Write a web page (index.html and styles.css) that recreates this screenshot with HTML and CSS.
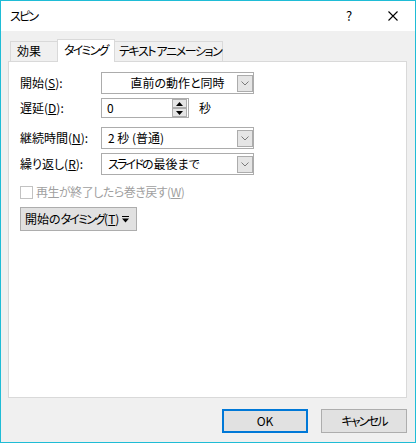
FILE: index.html
```html
<!DOCTYPE html>
<html lang="ja">
<head>
<meta charset="utf-8">
<title>スピン</title>
<link rel="stylesheet" href="styles.css">
</head>
<body>
<div class="window">
  <div class="titlebar">
    <span class="title kana">スピン</span>
    <span class="help">?</span>
    <span class="close"><svg width="10" height="10" viewBox="0 0 10 10"><path d="M0.5 0.5L9.5 9.5M9.5 0.5L0.5 9.5" stroke="#000" stroke-width="1.1" fill="none"/></svg></span>
  </div>
  <div class="tabs">
    <div class="tab tab-first">効果</div>
    <div class="tab tab-active kana">タイミング</div>
    <div class="tab tab-last kana">テキスト アニメーション</div>
  </div>
  <div class="panel">
    <div class="row row-1">
      <span class="label">開始(<u>S</u>):</span>
      <div class="combo">
        <span class="val val-center">直前の動作と同時</span>
        <span class="dd"><svg width="8" height="5" viewBox="0 0 8 5"><path d="M0.5 0.5L4 4L7.5 0.5" stroke="#7a7a7a" stroke-width="1" fill="none"/></svg></span>
      </div>
    </div>
    <div class="row row-2">
      <span class="label">遅延(<u>D</u>):</span>
      <div class="spin">
        <span class="val">0</span>
        <span class="spin-btns">
          <span class="sb"><svg width="7" height="4" viewBox="0 0 7 4"><path d="M0 4L3.5 0L7 4Z" fill="#000"/></svg></span>
          <span class="sb"><svg width="7" height="4" viewBox="0 0 7 4"><path d="M0 0L3.5 4L7 0Z" fill="#000"/></svg></span>
        </span>
      </div>
      <span class="unit">秒</span>
    </div>
    <div class="row row-3">
      <span class="label">継続時間(<u>N</u>):</span>
      <div class="combo">
        <span class="val">2 秒 (普通)</span>
        <span class="dd"><svg width="8" height="5" viewBox="0 0 8 5"><path d="M0.5 0.5L4 4L7.5 0.5" stroke="#7a7a7a" stroke-width="1" fill="none"/></svg></span>
      </div>
    </div>
    <div class="row row-4">
      <span class="label">繰り返し(<u>R</u>):</span>
      <div class="combo">
        <span class="val"><span class="kana">スライド</span>の最後まで</span>
        <span class="dd"><svg width="8" height="5" viewBox="0 0 8 5"><path d="M0.5 0.5L4 4L7.5 0.5" stroke="#7a7a7a" stroke-width="1" fill="none"/></svg></span>
      </div>
    </div>
    <div class="row row-check">
      <span class="cb"></span>
      <span class="disabled">再生が終了したら巻き戻す(<u>W</u>)</span>
    </div>
    <div class="row row-btn">
      <div class="tbtn">
        <span>開始の<span class="kana">タイミング</span>(<u>T</u>)</span>
        <svg class="tbtn-icon" width="7" height="7" viewBox="0 0 7 7"><path d="M0 0H7V1H0Z M0 2.5H7L3.5 6.5Z" fill="#000"/></svg>
      </div>
    </div>
  </div>
  <div class="buttons">
    <div class="btn btn-default">OK</div>
    <div class="btn kana">キャンセル</div>
  </div>
</div>
</body>
</html>
```
FILE: styles.css
```css
* { box-sizing: border-box; }
html, body { margin: 0; padding: 0; }
body {
  font-family: "Noto Sans CJK JP", "Noto Sans", sans-serif;
  font-size: 12px;
  line-height: 16px;
  color: #000;
  background: #fff;
  font-feature-settings: "palt";
}
u { text-underline-offset: 1px; }
.kana { letter-spacing: -1.8px; }

.window {
  width: 416px;
  height: 443px;
  border: 1px solid #1fbcd6;
  background: #f0f0f0;
  display: flex;
  flex-direction: column;
}

.titlebar {
  height: 30px;
  background: #fff;
  display: flex;
  align-items: center;
  padding-left: 9px;
  padding-right: 17px;
}
.title { flex: 1; }
.help { width: 12px; text-align: center; font-size: 13px; letter-spacing: 0; }
.close { width: 10px; height: 10px; margin-left: 33px; display: flex; }

.tabs {
  display: flex;
  align-items: flex-end;
  height: 22px;
  margin: 8px 0 0 9px;
}
.tab {
  height: 20px;
  border: 1px solid #d9d9d9;
  border-bottom: none;
  background: #f0f0f0;
  padding-left: 5px;
  line-height: 18px;
  white-space: nowrap;
}
.tab-first { width: 48px; padding-left: 6px; }
.tab-active {
  width: 58px;
  height: 23px;
  margin-left: -1px;
  margin-bottom: -1px;
  background: #fff;
  position: relative;
  z-index: 1;
  line-height: 20px;
  padding-left: 6px;
}
.tab-last { width: 109px; margin-left: -1px; padding-left: 4px; letter-spacing: -1.4px; }

.panel {
  margin-left: 7px;
  width: 399px;
  height: 337px;
  border: 1px solid #d9d9d9;
  background: #fff;
  padding: 10px 0 0 11px;
  display: flex;
  flex-direction: column;
}

.row { display: flex; align-items: center; }
.row-2 { margin-top: 4px; }
.row-3 { margin-top: 9px; }
.row-4 { margin-top: 4px; }
.row-check { margin-top: 9px; }
.row-btn { margin-top: 7px; }

.label { width: 81px; white-space: nowrap; }

.combo {
  width: 153px;
  height: 22px;
  border: 1px solid #acacac;
  background: #fff;
  display: flex;
  align-items: center;
}
.combo .val { flex: 1; padding-left: 6px; white-space: nowrap; }
.combo .val-center { text-align: center; padding-left: 16px; }
.dd {
  width: 16px;
  height: 17px;
  border: 1px solid #acacac;
  background: #e5e5e5;
  display: flex;
  align-items: center;
  justify-content: center;
}

.spin {
  width: 88px;
  height: 20px;
  border: 1px solid #acacac;
  background: #fff;
  display: flex;
}
.spin .val { flex: 1; padding-left: 5px; line-height: 18px; }
.spin-btns {
  width: 15px;
  margin-right: 1px;
  display: flex;
  flex-direction: column;
}
.sb {
  height: 9px;
  border: 1px solid #adadad;
  background: #e5e5e5;
  display: flex;
  align-items: center;
  justify-content: center;
}
.unit { margin-left: 10px; }

.cb {
  width: 13px;
  height: 13px;
  border: 1px solid #c2c2c2;
  background: #fff;
  margin-right: 3px;
}
.disabled { color: #a0a0a0; letter-spacing: -0.5px; }

.tbtn {
  width: 117px;
  height: 24px;
  border: 1px solid #adadad;
  background: #e1e1e1;
  display: flex;
  align-items: center;
  padding-left: 4px;
  padding-right: 7px;
  white-space: nowrap;
}
.tbtn-icon { margin-left: auto; }

.buttons {
  display: flex;
  justify-content: flex-end;
  gap: 13px;
  margin-top: 11px;
  padding-right: 8px;
}
.btn {
  width: 86px;
  height: 24px;
  border: 1px solid #adadad;
  background: #e1e1e1;
  display: flex;
  align-items: center;
  justify-content: center;
}
.btn-default { border: 2px solid #0078d7; }
```
